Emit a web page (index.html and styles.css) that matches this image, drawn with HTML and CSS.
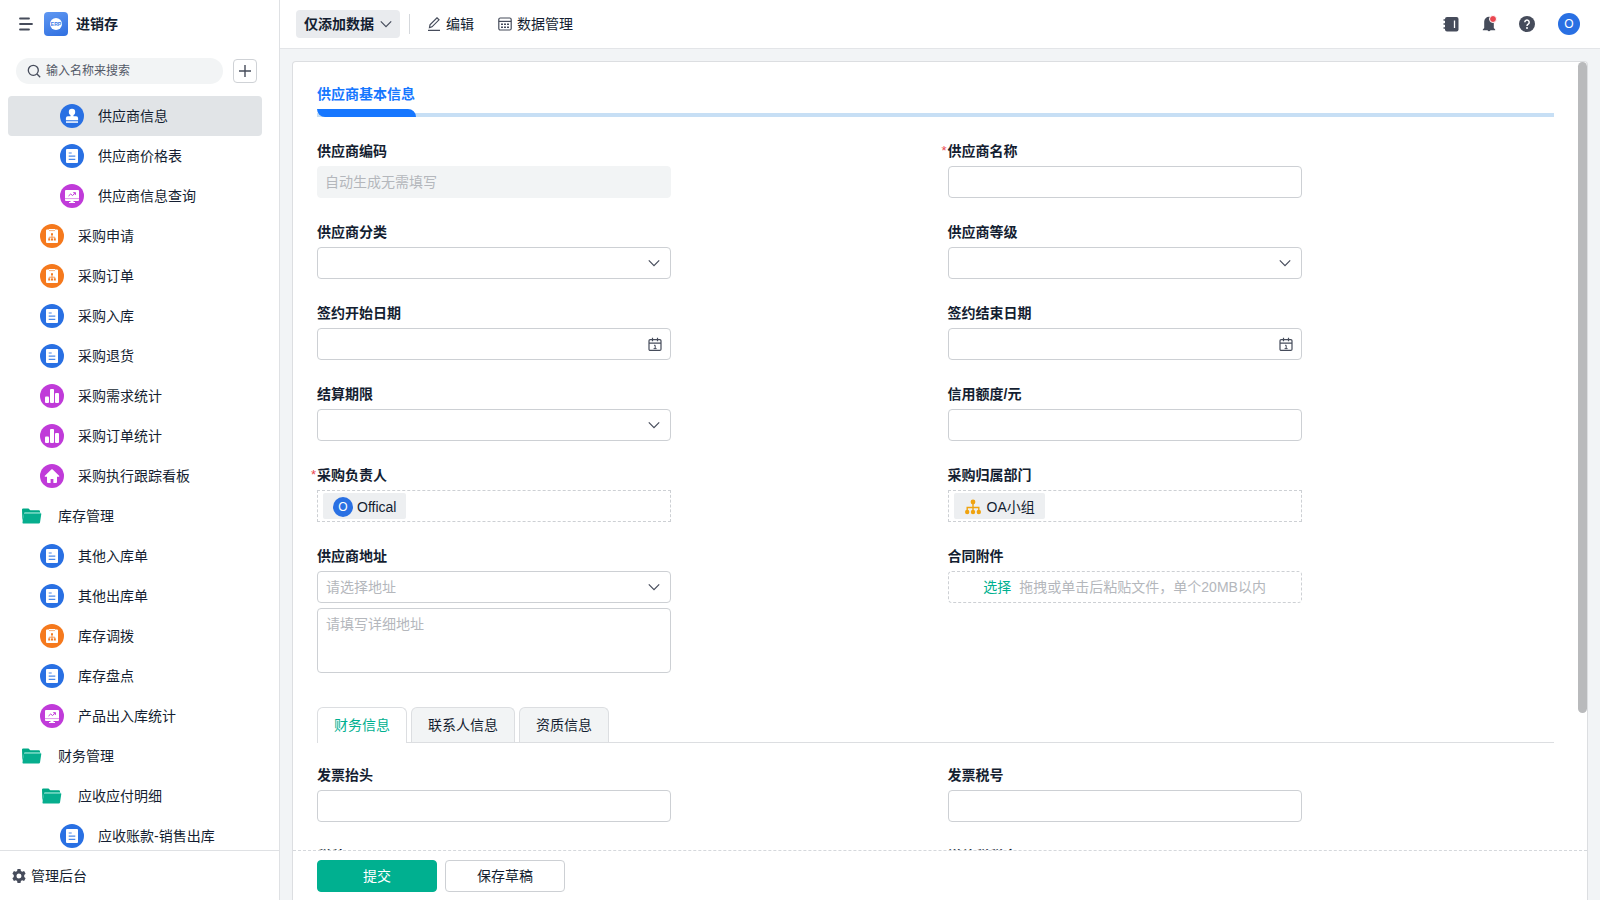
FILE: index.html
```html
<!DOCTYPE html>
<html lang="zh-CN">
<head>
<meta charset="utf-8">
<title>进销存</title>
<link rel="stylesheet" href="styles.css">
</head>
<body>
<svg class="sprite" aria-hidden="true">
  <symbol id="i-chevron" viewBox="0 0 12 12"><path d="M.8 3.400 6 8.600l5.200-5.200" fill="none" stroke="currentColor" stroke-width="1.200"/></symbol>
  <symbol id="i-cal" viewBox="0 0 14 14"><g fill="none" stroke="#464c5b" stroke-width="1.200"><rect x="1" y="2.600" width="12" height="10.800" rx="1.200"/><path d="M1 6.200h12M4.500.8v3.400M9.500.8v3.400"/><path d="M6 8.300h1.200v3.300M5.600 11.600h3" stroke-width="1"/></g></symbol>
  <symbol id="i-stamp" viewBox="0 0 24 24"><circle cx="12" cy="12" r="12" fill="#2970e3"/><g fill="#fff"><circle cx="12" cy="8" r="3.200"/><path d="M10.500 9h3v3.200h2.600a2 2 0 0 1 2 2v2H5.900v-2a2 2 0 0 1 2-2h2.600z"/><path d="M6 17.300h12v1.500H6z"/></g></symbol>
  <symbol id="i-form" viewBox="0 0 24 24"><circle cx="12" cy="12" r="12" fill="#2970e3"/><rect x="6" y="5" width="12" height="14" rx="1" fill="#fff"/><path d="M8.700 9h3M8.700 12.200h6.600M8.700 15.400h6.600" stroke="#4a88ea" stroke-width="1.200"/></symbol>
  <symbol id="i-flow" viewBox="0 0 24 24"><circle cx="12" cy="12" r="12" fill="#f5791d"/><path d="M7 5.500h2V5h6v.5h2a1 1 0 0 1 1 1V18a1 1 0 0 1-1 1H7a1 1 0 0 1-1-1V6.500a1 1 0 0 1 1-1z" fill="#fff"/><path d="M9 6.600h6" stroke="#f9b07c" stroke-width="1"/><path d="M12 10.500v4M9.200 15v-1.800h5.600V15" fill="none" stroke="#f79a55" stroke-width="1"/><path d="M11 9.300h2v2h-2zM8.200 14.500h2v2h-2zM11 14.500h2v2h-2zM13.800 14.500h2v2h-2z" fill="#f5791d"/></symbol>
  <symbol id="i-board" viewBox="0 0 24 24"><circle cx="12" cy="12" r="12" fill="#c03bd9"/><path d="M6 6h12a1 1 0 0 1 1 1v9a1 1 0 0 1-1 1h-4.500v1H15v1H9v-1h1.500v-1H6a1 1 0 0 1-1-1V7a1 1 0 0 1 1-1z" fill="#fff"/><path d="M5 14.600h14" stroke="#dd96ea" stroke-width="1"/><path d="M8.500 12l2.200-2 1.800 1.500 2.800-2.600M13.200 8.700h2.200v2.200" fill="none" stroke="#c03bd9" stroke-width="1"/></symbol>
  <symbol id="i-chart" viewBox="0 0 24 24"><circle cx="12" cy="12" r="12" fill="#c03bd9"/><g fill="#fff"><rect x="5" y="12.500" width="4" height="6.500" rx="1"/><rect x="10" y="5" width="4" height="14" rx="1"/><rect x="15" y="9" width="4" height="10" rx="1"/></g></symbol>
  <symbol id="i-home" viewBox="0 0 24 24"><circle cx="12" cy="12" r="12" fill="#c03bd9"/><path d="M11.300 5.600 4.900 11.800c-.4.500-.1 1 .4 1H7V18a1 1 0 0 0 1 1h2.600v-4h2.800v4H16a1 1 0 0 0 1-1v-5.200h1.700c.5 0 .8-.5.4-1l-6.400-6.200a1 1 0 0 0-1.400 0z" fill="#fff"/></symbol>
  <symbol id="i-folder" viewBox="0 0 24 24"><path d="M2 5.600a1.200 1.200 0 0 1 1.200-1.200h5.300l1.800 1.800h8.500A1.200 1.200 0 0 1 20 7.400V9H4.200L2.400 17z" fill="#00a886"/><path d="M4.800 9.200h15.800c.5 0 .8.400.7.900L20 18.500a1.300 1.300 0 0 1-1.300 1.100H3.600c-.8 0-1.200-.5-1.100-1.200l1.200-8.300c.1-.5.500-.9 1.100-.9z" fill="#06ae8e"/><path d="M4.400 8.800h16.400" stroke="#9eeadb" stroke-width=".9"/></symbol>
</svg>
<div class="app">
  <aside class="sidebar">
    <header class="brand">
      <button class="plain" aria-label="收起菜单"><svg width="14" height="14" viewBox="0 0 14 14"><path d="M1 1.500h9M1 7h12M1 12.500h9" stroke="#464c5b" stroke-width="1.800" stroke-linecap="round"/></svg></button>
      <span class="logo"><span class="logo-disc">ERP</span></span>
      <h1 class="brand-name">进销存</h1>
    </header>
    <div class="search-row">
      <label class="search"><svg width="14" height="14" viewBox="0 0 14 14" fill="none" stroke="#464c5b" stroke-width="1.300"><circle cx="6.300" cy="6.300" r="5"/><path d="m10 10 3.200 3.200"/></svg><input type="text" placeholder="输入名称来搜索" aria-label="搜索"></label>
      <button class="add" aria-label="新建"><svg width="12" height="12" viewBox="0 0 12 12"><path d="M6 0v12M0 6h12" stroke="#464c5b" stroke-width="1.400"/></svg></button>
    </div>
    <nav class="menu">
      <a href="#" class="item lv3 active"><svg class="ico"><use href="#i-stamp"/></svg>供应商信息</a>
      <a href="#" class="item lv3"><svg class="ico"><use href="#i-form"/></svg>供应商价格表</a>
      <a href="#" class="item lv3"><svg class="ico"><use href="#i-board"/></svg>供应商信息查询</a>
      <a href="#" class="item lv2"><svg class="ico"><use href="#i-flow"/></svg>采购申请</a>
      <a href="#" class="item lv2"><svg class="ico"><use href="#i-flow"/></svg>采购订单</a>
      <a href="#" class="item lv2"><svg class="ico"><use href="#i-form"/></svg>采购入库</a>
      <a href="#" class="item lv2"><svg class="ico"><use href="#i-form"/></svg>采购退货</a>
      <a href="#" class="item lv2"><svg class="ico"><use href="#i-chart"/></svg>采购需求统计</a>
      <a href="#" class="item lv2"><svg class="ico"><use href="#i-chart"/></svg>采购订单统计</a>
      <a href="#" class="item lv2"><svg class="ico"><use href="#i-home"/></svg>采购执行跟踪看板</a>
      <a href="#" class="item lv1"><svg class="ico"><use href="#i-folder"/></svg>库存管理</a>
      <a href="#" class="item lv2"><svg class="ico"><use href="#i-form"/></svg>其他入库单</a>
      <a href="#" class="item lv2"><svg class="ico"><use href="#i-form"/></svg>其他出库单</a>
      <a href="#" class="item lv2"><svg class="ico"><use href="#i-flow"/></svg>库存调拨</a>
      <a href="#" class="item lv2"><svg class="ico"><use href="#i-form"/></svg>库存盘点</a>
      <a href="#" class="item lv2"><svg class="ico"><use href="#i-board"/></svg>产品出入库统计</a>
      <a href="#" class="item lv1"><svg class="ico"><use href="#i-folder"/></svg>财务管理</a>
      <a href="#" class="item lv2"><svg class="ico"><use href="#i-folder"/></svg>应收应付明细</a>
      <a href="#" class="item lv3"><svg class="ico"><use href="#i-form"/></svg>应收账款-销售出库</a>
    </nav>
    <a href="#" class="admin"><svg width="14" height="14" viewBox="0 0 14 14"><path fill="#464c5b" fill-rule="evenodd" d="M5.500 0h3l.4 1.900 1.300.8 1.900-.6 1.500 2.600-1.400 1.300v2l1.400 1.300-1.500 2.600-1.900-.6-1.300.8-.4 1.900h-3l-.4-1.900-1.300-.8-1.900.6L.4 9.300 1.800 8V6L.4 4.700l1.500-2.600 1.900.6 1.300-.8zM7 4.500a2.500 2.500 0 1 0 0 5 2.500 2.500 0 0 0 0-5z"/></svg>管理后台</a>
  </aside>
  <div class="main">
    <header class="topbar">
      <button class="mode">仅添加数据<svg width="12" height="12"><use href="#i-chevron"/></svg></button>
      <span class="divider"></span>
      <button class="tool"><svg width="14" height="14" viewBox="0 0 14 14" fill="none" stroke="#464c5b" stroke-width="1.200"><path d="M1 13.300h12M2.500 10.600l.5-2.800 7-7 2 2-7 7z"/></svg>编辑</button>
      <button class="tool"><svg width="14" height="14" viewBox="0 0 14 14" fill="none" stroke="#464c5b" stroke-width="1.200"><rect x=".8" y="1" width="12.400" height="12" rx="1.500"/><path d="M.8 4.400h12.400"/><path d="M3 7.200h8M3 10.200h8" stroke-width="1.500" stroke-dasharray="2 1"/></svg>数据管理</button>
      <div class="actions">
        <button class="plain" aria-label="通讯录"><svg width="16" height="16" viewBox="0 0 16 16"><rect x="2" y="1" width="13.500" height="14.500" rx="2" fill="#464c5b"/><path d="M.5 4H3M.5 8H3M.5 12H3" stroke="#464c5b" stroke-width="1.600"/><path d="M11.500 4.500v7.500" stroke="#fff" stroke-width="1.300"/></svg></button>
        <button class="plain bell" aria-label="通知"><svg width="16" height="16" viewBox="0 0 16 16"><path fill="#464c5b" d="M8 .8a4.800 4.800 0 0 0-4.800 4.800V12L1.800 13.500v.8h4.700a1.600 1.600 0 0 0 3 0h4.700v-.8L12.800 12V5.600A4.800 4.800 0 0 0 8 .8z"/></svg><span class="dot"></span></button>
        <button class="plain" aria-label="帮助"><svg width="16" height="16" viewBox="0 0 16 16"><circle cx="8" cy="8" r="8" fill="#464c5b"/><path d="M5.800 6.200a2.200 2.200 0 1 1 3.400 1.900C8.300 8.700 8 9 8 9.900" fill="none" stroke="#fff" stroke-width="1.500"/><circle cx="8" cy="12.100" r="1" fill="#fff"/></svg></button>
        <span class="avatar user">O</span>
      </div>
    </header>
    <div class="stage">
      <form class="card">
        <div class="scroll">
          <div class="section"><h2 class="section-title">供应商基本信息</h2></div>
          <div class="grid first">
            <div class="field"><label for="f1">供应商编码</label><input id="f1" class="ctl" type="text" placeholder="自动生成无需填写" disabled></div>
            <div class="field req"><label for="f2">供应商名称</label><input id="f2" class="ctl" type="text"></div>
            <div class="field"><label for="f3">供应商分类</label><div class="wrap"><select id="f3" class="ctl"><option></option></select><svg class="tail" width="12" height="12"><use href="#i-chevron"/></svg></div></div>
            <div class="field"><label for="f4">供应商等级</label><div class="wrap"><select id="f4" class="ctl"><option></option></select><svg class="tail" width="12" height="12"><use href="#i-chevron"/></svg></div></div>
            <div class="field"><label for="f5">签约开始日期</label><div class="wrap"><input id="f5" class="ctl" type="text"><svg class="tail cal" width="14" height="14"><use href="#i-cal"/></svg></div></div>
            <div class="field"><label for="f6">签约结束日期</label><div class="wrap"><input id="f6" class="ctl" type="text"><svg class="tail cal" width="14" height="14"><use href="#i-cal"/></svg></div></div>
            <div class="field"><label for="f7">结算期限</label><div class="wrap"><select id="f7" class="ctl"><option></option></select><svg class="tail" width="12" height="12"><use href="#i-chevron"/></svg></div></div>
            <div class="field"><label for="f8">信用额度/元</label><input id="f8" class="ctl" type="text"></div>
            <div class="field req"><span class="label">采购负责人</span><div class="picker"><span class="chip"><span class="avatar small">O</span>Offical</span></div></div>
            <div class="field"><span class="label">采购归属部门</span><div class="picker"><span class="chip dept"><svg width="16" height="16" viewBox="0 0 16 16"><path d="M8 3v9M2.200 13V8.500h11.600V13" fill="none" stroke="#f0a30f" stroke-width="1.400"/><g fill="#f0a30f"><circle cx="8" cy="3" r="2.400"/><circle cx="2.200" cy="13" r="2.200"/><circle cx="8" cy="13" r="2.200"/><circle cx="13.800" cy="13" r="2.200"/></g></svg>OA小组</span></div></div>
            <div class="field"><label for="f11">供应商地址</label><div class="wrap"><select id="f11" class="ctl empty"><option>请选择地址</option></select><svg class="tail" width="12" height="12"><use href="#i-chevron"/></svg></div><textarea class="ctl area" placeholder="请填写详细地址" aria-label="详细地址"></textarea></div>
            <div class="field"><span class="label">合同附件</span><div class="picker upload"><button type="button" class="pick">选择</button><span>拖拽或单击后粘贴文件，单个20MB以内</span></div></div>
          </div>
          <div class="tabs" role="tablist">
            <button type="button" class="tab on" role="tab" aria-selected="true">财务信息</button>
            <button type="button" class="tab" role="tab">联系人信息</button>
            <button type="button" class="tab" role="tab">资质信息</button>
          </div>
          <div class="grid second">
            <div class="field"><label for="g1">发票抬头</label><input id="g1" class="ctl" type="text"></div>
            <div class="field"><label for="g2">发票税号</label><input id="g2" class="ctl" type="text"></div>
            <div class="field"><label for="g3">税种</label><input id="g3" class="ctl" type="text"></div>
            <div class="field"><label for="g4">增值税税率</label><input id="g4" class="ctl" type="text"></div>
          </div>
        </div>
        <span class="thumb"></span>
        <footer class="foot">
          <button type="button" class="btn primary">提交</button>
          <button type="button" class="btn">保存草稿</button>
        </footer>
      </form>
    </div>
  </div>
</div>
</body>
</html>
```
FILE: styles.css
```css
* { box-sizing: border-box; }
body {
  margin: 0;
  color: #141e31;
  font: 14px/20px "Liberation Sans", "Noto Sans CJK SC", sans-serif;
}
button, input, select, textarea { font: inherit; color: inherit; margin: 0; }
button { cursor: pointer; }
a { color: inherit; text-decoration: none; }
svg { flex: none; display: block; }
.sprite { display: none; }
.plain { border: 0; background: none; padding: 0; display: flex; }

.app { display: flex; height: 100vh; overflow: hidden; background: #f2f4f6; }

/* sidebar */
.sidebar {
  flex: none;
  width: 280px;
  display: flex;
  flex-direction: column;
  background: #fff;
  border-right: 1px solid #dfe1e4;
}
.brand { flex: none; display: flex; align-items: center; height: 48px; padding-left: 19px; }
.logo {
  display: flex; align-items: center; justify-content: center;
  width: 24px; height: 24px; margin: 0 8px 0 11px;
  border-radius: 4px;
  background: linear-gradient(160deg, #6098f2, #2f6fe0);
}
.logo-disc {
  width: 12px; height: 12px; border-radius: 6px;
  background: #fff; color: #3b7be8;
  font-size: 5px; font-weight: 700; line-height: 12px; text-align: center;
}
.brand-name { margin: 0; font-size: 14px; font-weight: 700; }
.search-row { flex: none; display: flex; align-items: center; gap: 10px; height: 48px; padding: 0 22px 2px 16px; }
.search {
  flex: 1; min-width: 0; height: 26px;
  display: flex; align-items: center; gap: 5px;
  padding: 0 11px; border-radius: 13px; background: #f2f4f5;
}
.search input { flex: 1; min-width: 0; border: 0; padding: 0; background: none; outline: 0; font-size: 12px; }
.search input::placeholder { color: #525967; opacity: 1; }
.add {
  width: 24px; height: 24px; padding: 0;
  display: flex; align-items: center; justify-content: center;
  border: 1px solid #cfd2d6; border-radius: 4px; background: #fff;
}
.menu { flex: 1; min-height: 0; overflow: hidden; padding: 0 17px 0 8px; }
.item { display: flex; align-items: center; gap: 14px; height: 40px; border-radius: 4px; }
.item.active { background: #e1e4e7; }
.lv1 { padding-left: 12px; }
.lv2 { padding-left: 32px; }
.lv3 { padding-left: 52px; }
.ico { width: 24px; height: 24px; }
.admin {
  flex: none; display: flex; align-items: center; gap: 5px;
  height: 50px; padding-left: 12px; border-top: 1px solid #dfe1e4;
}

/* top bar */
.main { flex: 1; min-width: 0; display: flex; flex-direction: column; }
.topbar {
  flex: none; display: flex; align-items: center;
  height: 49px; padding: 0 20px 0 16px;
  background: #fff; border-bottom: 1px solid #e3e5e8;
}
.mode {
  display: flex; align-items: center; gap: 6px;
  height: 28px; padding: 0 8px;
  border: 0; border-radius: 4px; background: #e9ebee; font-weight: 700;
}
.mode svg { color: #464c5b; }
.divider { width: 1px; height: 20px; margin: 0 17px 0 9px; background: #d5d8dc; }
.tool { display: flex; align-items: center; gap: 5px; padding: 0; margin-right: 24px; border: 0; background: none; }
.actions { margin-left: auto; display: flex; align-items: center; gap: 22px; }
.bell { position: relative; }
.dot {
  position: absolute; top: -1px; right: 0;
  width: 8px; height: 8px; border-radius: 4px;
  background: #ea4650; border: 1px solid #fff;
}
.avatar {
  flex: none; width: 22px; height: 22px; border-radius: 50%;
  background: #2970e3; color: #fff;
  font-size: 12px; line-height: 22px; text-align: center;
}
.avatar.user { margin-left: 1px; }
.avatar.small { width: 20px; height: 20px; line-height: 20px; }

/* form card */
.stage { flex: 1; min-height: 0; padding: 12px 12px 0; display: flex; }
.card {
  position: relative; flex: 1; min-width: 0;
  display: flex; flex-direction: column;
  border: 1px solid #dcdee1; border-bottom: 0;
  border-radius: 4px 4px 0 0; background: #fff;
}
.scroll { flex: 1; min-height: 0; overflow: auto; scrollbar-width: none; padding: 22px 33px 0 24px; }
.thumb { position: absolute; top: 0; right: 0; width: 9px; height: 651px; border-radius: 5px; background: #b9babc; }
.section { border-bottom: 4px solid #c7dff5; }
.section-title {
  position: relative; width: max-content; margin: 0 0 -4px;
  font-size: 14px; font-weight: 700; color: #1677ff;
}
.section-title::after {
  content: ""; display: block; height: 8px; margin: 5px -1px 0 0;
  border-radius: 0 8px 0 8px; background: #1677ff;
}
.grid { display: grid; grid-template-columns: 1fr 1fr; gap: 24px; }
.first { padding-top: 24px; }
.second { padding: 22px 0 40px; }
.field { position: relative; width: calc(65% - 40px); display: flex; flex-direction: column; gap: 5px; }
.field > label, .label { font-weight: 700; height: 20px; }
.req::before { content: "*"; position: absolute; left: -6px; top: 0; color: #ea4650; font-size: 13px; }
.ctl {
  width: 100%; height: 32px; padding: 0 8px; display: block;
  border: 1px solid #cdd0d4; border-radius: 4px; background: #fff; outline: 0;
}
.ctl::placeholder { color: #b4b7bc; opacity: 1; }
.ctl:disabled { border-color: #f2f4f5; background: #f2f4f5; padding: 0 7px; }
select.ctl { appearance: none; }
.empty { color: #b4b7bc; }
.area { height: 65px; padding: 5px 8px; resize: none; }
.wrap { position: relative; }
.tail { position: absolute; right: 11px; top: 10px; color: #464c5b; pointer-events: none; }
.cal { right: 9px; top: 9px; }
.picker { height: 32px; padding: 0 5px; display: flex; align-items: center; border: 1px dashed #cdd0d4; }
.chip { display: flex; align-items: center; gap: 4px; height: 26px; padding: 1px 10px 0; background: #edeff1; border-radius: 2px; }
.dept { padding-left: 11px; gap: 6px; }
.upload { justify-content: center; gap: 8px; border-radius: 4px; color: #b4b7bc; }
.pick { border: 0; background: none; padding: 0; color: #00b090; }

.tabs { display: flex; gap: 4px; margin-top: 34px; border-bottom: 1px solid #dcdee1; }
.tab {
  height: 35px; padding: 0 16px;
  border: 1px solid #dcdee1; border-bottom: 0;
  border-radius: 6px 6px 0 0; background: #f2f4f5;
}
.tab.on { height: 36px; margin-bottom: -1px; padding-bottom: 1px; background: #fff; color: #00b090; }

.foot { flex: none; height: 50px; display: flex; align-items: center; gap: 8px; padding: 1px 24px 0; border-top: 1px dashed #d5d8dc; }
.btn { width: 120px; height: 32px; border: 1px solid #cdd0d4; border-radius: 4px; background: #fff; }
.primary { border-color: #00b090; background: #00b090; color: #fff; }
```
